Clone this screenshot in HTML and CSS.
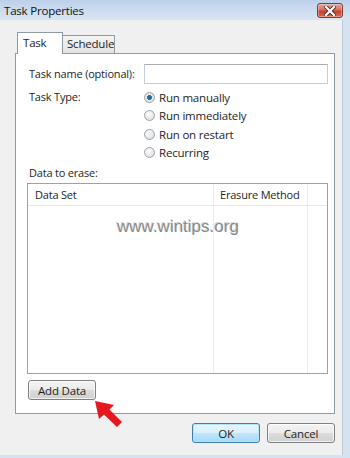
FILE: index.html
```html
<!DOCTYPE html>
<html lang="en">
<head>
    <meta charset="UTF-8">
    <title>Task Properties</title>
    <link rel="stylesheet" href="styles.css">
</head>
<body>
    <div class="window">
        <div class="titlebar">
            <span class="title">Task Properties</span>
            <button class="close-btn" aria-label="Close">
                <svg width="12" height="10" viewBox="0 0 12 10">
                    <path d="M2 1 L10 9 M10 1 L2 9" stroke="#5a2a25" stroke-width="4" stroke-linecap="square"/>
                    <path d="M2 1 L10 9 M10 1 L2 9" stroke="#ffffff" stroke-width="2.2" stroke-linecap="square"/>
                </svg>
            </button>
        </div>

        <div class="client">
            <div class="tabs">
                <div class="tab active">Task</div>
                <div class="tab">Schedule</div>
            </div>

            <div class="panel">
                <div class="field-row">
                    <label for="task-name">Task name (optional):</label>
                    <input type="text" id="task-name">
                </div>

                <div class="field-row type-row">
                    <span class="field-label">Task Type:</span>
                    <div class="radio-group">
                        <div class="radio-item"><span class="radio checked"></span>Run manually</div>
                        <div class="radio-item"><span class="radio"></span>Run immediately</div>
                        <div class="radio-item"><span class="radio"></span>Run on restart</div>
                        <div class="radio-item"><span class="radio"></span>Recurring</div>
                    </div>
                </div>

                <div class="section-label">Data to erase:</div>

                <div class="listview">
                    <div class="lv-header">
                        <div class="lv-col col-set">Data Set</div>
                        <div class="lv-col col-method">Erasure Method</div>
                        <div class="lv-col col-rest"></div>
                    </div>
                    <div class="lv-body">
                        <div class="lv-col col-set"></div>
                        <div class="lv-col col-method"></div>
                        <div class="lv-col col-rest"></div>
                    </div>
                </div>

                <button class="btn add-btn">Add Data</button>
            </div>

            <div class="footer">
                <button class="btn default">OK</button>
                <button class="btn">Cancel</button>
            </div>
        </div>
    </div>

    <!-- overlays on the screenshot -->
    <div class="watermark">www.wintips.org</div>
    <svg class="red-arrow" width="34" height="34" viewBox="0 0 34 34">
        <polygon points="2,2 21,6 16.5,10.5 29,23 24,28 11,15.5 6,20" fill="#e8161d"/>
    </svg>
</body>
</html>
```

FILE: styles.css
```css
:root {
    --frame: #d5e2f1;
    --client: #f0f0f0;
    --border: #8e9aa6;
    --text: #1e1e1e;
}

* {
    box-sizing: border-box;
    margin: 0;
    padding: 0;
    font-family: 'Open Sans', 'Noto Sans', sans-serif;
}

body {
    width: 350px;
    height: 458px;
    overflow: hidden;
    background-color: var(--frame);
    color: var(--text);
    font-size: 11px;
    letter-spacing: -0.2px;
    position: relative;
}

.window {
    width: 350px;
    height: 458px;
    display: flex;
    flex-direction: column;
}

.titlebar {
    height: 20px;
    background: linear-gradient(to bottom, #bcd0ea, #cfdef1 60%, #d8e4f2);
    display: flex;
    align-items: center;
    justify-content: space-between;
    padding: 0 7px 0 4px;
}

.title {
    font-size: 11.5px;
    color: #111;
}

.close-btn {
    width: 26px;
    height: 15px;
    margin-top: 1px;
    border: 1px solid #7e3b34;
    border-radius: 3px;
    background: linear-gradient(to bottom, #e5a69c, #d7705f 45%, #c5402e 55%, #d66a52);
    display: flex;
    align-items: center;
    justify-content: center;
    box-shadow: inset 0 0 0 1px rgba(255,255,255,0.35);
}

.client {
    width: 343px;
    height: 435px;
    background-color: var(--client);
    border-right: 1px solid #c0c8d2;
    padding: 12px 0 0 15px;
}

.tabs {
    display: flex;
    align-items: flex-end;
    height: 21px;
    padding-left: 2px;
    position: relative;
    z-index: 1;
}

.tab {
    height: 18px;
    padding: 0 4px;
    border: 1px solid var(--border);
    border-bottom: none;
    background: linear-gradient(to bottom, #f4f4f4, #e3e3e3);
    line-height: 16px;
    font-size: 11.5px;
}

.tab.active {
    height: 22px;
    width: 46px;
    padding-left: 5px;
    margin-bottom: -1px;
    background: #ffffff;
    line-height: 19px;
}

.tab + .tab {
    border-left: none;
    width: 52px;
}

.panel {
    width: 320px;
    height: 361px;
    background: #ffffff;
    border: 1px solid var(--border);
    padding: 10px 5px 0 13px;
}

.field-row {
    display: flex;
}

.field-row label,
.field-label {
    width: 115px;
    flex-shrink: 0;
}

.field-row label {
    line-height: 20px;
}

.field-row input {
    width: 184px;
    height: 20px;
    border: 1px solid #c5cdd6;
    border-top-color: #abadb3;
}

.type-row {
    margin-top: 4px;
}

.field-label {
    line-height: 18px;
}

.radio-group {
    display: flex;
    flex-direction: column;
}

.radio-item {
    display: flex;
    align-items: center;
    height: 18.5px;
    font-size: 11.5px;
}

.radio {
    width: 11px;
    height: 11px;
    border-radius: 50%;
    margin-right: 4px;
    border: 1px solid #9ea3a9;
    background: radial-gradient(circle at 40% 35%, #ffffff, #e4e6e8 60%, #c9ccd0);
}

.radio.checked {
    background: radial-gradient(circle, #1d5f9a 0, #2d77b6 2.2px, #e9ecef 2.8px, #d3d6da);
}

.section-label {
    margin-top: 2px;
    line-height: 17px;
}

.listview {
    width: 301px;
    height: 191px;
    margin-top: 2px;
    margin-left: -2px;
    border: 1px solid #9aa3ad;
    display: flex;
    flex-direction: column;
}

.lv-header,
.lv-body {
    display: flex;
}

.lv-header {
    height: 22px;
    border-bottom: 1px solid #e3e6ea;
}

.lv-body {
    flex: 1;
}

.lv-col {
    line-height: 21px;
    padding-left: 7px;
}

.col-set {
    width: 186px;
    border-right: 1px solid #eaecef;
}

.col-method {
    width: 94px;
    padding-left: 6px;
    border-right: 1px solid #eaecef;
}

.col-rest {
    flex: 1;
}

.btn {
    height: 20px;
    border: 1px solid #7c7f84;
    border-radius: 3px;
    background: linear-gradient(to bottom, #f4f4f4, #ebebeb 48%, #dcdcdc 52%, #d0d0d0);
    color: var(--text);
    font-size: 11.5px;
    letter-spacing: -0.2px;
    box-shadow: inset 0 0 0 1px rgba(255,255,255,0.7);
}

.add-btn {
    width: 68px;
    margin-top: 6px;
    margin-left: -1px;
}

.footer {
    display: flex;
    justify-content: flex-end;
    gap: 7px;
    padding: 9px 7px 0 0;
}

.footer .btn {
    width: 68px;
}

.btn.default {
    border-color: #3c7fb1;
    background: linear-gradient(to bottom, #eaf6fd, #d9f0fc 48%, #bee6fd 52%, #a7d9f5);
    box-shadow: inset 0 0 0 1px #b4e3fa;
}

.watermark {
    position: absolute;
    left: 117px;
    top: 217px;
    font-family: 'Liberation Sans', Arial, sans-serif;
    font-size: 17px;
    letter-spacing: 0;
    color: #8a8a8a;
    text-shadow: 1px 1px 0 #ffffff, -1px -1px 0 #d8d8d8;
}

.red-arrow {
    position: absolute;
    left: 93px;
    top: 399px;
}
```
